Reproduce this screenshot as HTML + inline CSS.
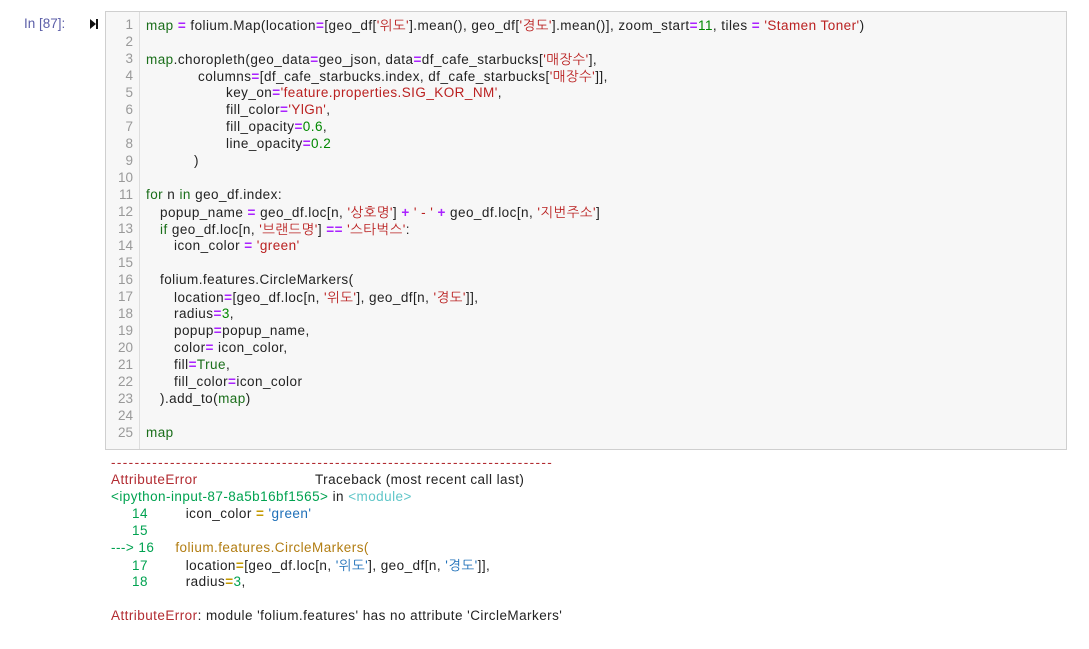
<!DOCTYPE html>
<html><head><meta charset="utf-8">
<style>
html,body{margin:0;padding:0;background:#fff;width:1089px;height:649px;overflow:hidden;}
body{font-family:"Liberation Sans","NanumGothic","Noto Sans CJK KR",sans-serif;font-size:13.5px;color:#222;letter-spacing:0.45px;}
.prompt{position:absolute;left:24px;top:16px;color:#5c5fa8;font-size:13.5px;letter-spacing:0;}
.run{position:absolute;left:90px;top:19px;width:0;height:0;border-left:6px solid #111;border-top:5px solid transparent;border-bottom:5px solid transparent;}
.runbar{position:absolute;left:96px;top:19px;width:2px;height:10px;background:#111;}
.box{position:absolute;left:105px;top:11px;width:960px;height:437px;background:#f7f7f7;border:1px solid #cfcfcf;}
.gut{position:absolute;left:0;top:0;width:33px;height:437px;border-right:1px solid #ddd;background:#f7f7f7;}
.ln{position:absolute;left:0;width:27px;text-align:right;color:#999;letter-spacing:0;}
.cl{position:absolute;left:40px;white-space:pre;}
.o{color:#aa22ff;font-weight:bold}
.s{color:#ba2121}
.n{color:#080}
.g{color:#1a6e1a}
.out{position:absolute;left:111px;white-space:pre;}
.r{color:#b22b31}
.gr{color:#00a250}
.cy{color:#60c6c8}
.bl{color:#1d6fb8}
.y{color:#c49a00;font-weight:bold}
.yl{color:#b27d12}
</style></head><body>
<div class="prompt">In [87]:</div>
<div class="run"></div><div class="runbar"></div>
<div class="box">
<div class="gut"></div>
<div class="ln" style="top:5px">1</div><div class="ln" style="top:22px">2</div><div class="ln" style="top:39px">3</div><div class="ln" style="top:56px">4</div><div class="ln" style="top:73px">5</div><div class="ln" style="top:90px">6</div><div class="ln" style="top:107px">7</div><div class="ln" style="top:124px">8</div><div class="ln" style="top:141px">9</div><div class="ln" style="top:158px">10</div><div class="ln" style="top:175px">11</div><div class="ln" style="top:192px">12</div><div class="ln" style="top:209px">13</div><div class="ln" style="top:226px">14</div><div class="ln" style="top:243px">15</div><div class="ln" style="top:260px">16</div><div class="ln" style="top:277px">17</div><div class="ln" style="top:294px">18</div><div class="ln" style="top:311px">19</div><div class="ln" style="top:328px">20</div><div class="ln" style="top:345px">21</div><div class="ln" style="top:362px">22</div><div class="ln" style="top:379px">23</div><div class="ln" style="top:396px">24</div><div class="ln" style="top:413px">25</div>
<div class="cl" style="top:5px"><span class="g">map</span> <span class="o">=</span> folium.Map(location<span class="o">=</span>[geo_df[<span class="s">'위도'</span>].mean(), geo_df[<span class="s">'경도'</span>].mean()], zoom_start<span class="o">=</span><span class="n">11</span>, tiles <span class="o">=</span> <span class="s">'Stamen Toner'</span>)</div>
<div class="cl" style="top:39px"><span class="g">map</span>.choropleth(geo_data<span class="o">=</span>geo_json, data<span class="o">=</span>df_cafe_starbucks[<span class="s">'매장수'</span>],</div>
<div class="cl" style="top:56px;left:92px">columns<span class="o">=</span>[df_cafe_starbucks.index, df_cafe_starbucks[<span class="s">'매장수'</span>]],</div>
<div class="cl" style="top:73px;left:120px">key_on<span class="o">=</span><span class="s">'feature.properties.SIG_KOR_NM'</span>,</div>
<div class="cl" style="top:90px;left:120px">fill_color<span class="o">=</span><span class="s">'YlGn'</span>,</div>
<div class="cl" style="top:107px;left:120px">fill_opacity<span class="o">=</span><span class="n">0.6</span>,</div>
<div class="cl" style="top:124px;left:120px">line_opacity<span class="o">=</span><span class="n">0.2</span></div>
<div class="cl" style="top:141px;left:88px">)</div>
<div class="cl" style="top:175px"><span class="g">for</span> n <span class="g">in</span> geo_df.index:</div>
<div class="cl" style="top:192px;left:54px">popup_name <span class="o">=</span> geo_df.loc[n, <span class="s">'상호명'</span>] <span class="o">+</span> <span class="s">' - '</span> <span class="o">+</span> geo_df.loc[n, <span class="s">'지번주소'</span>]</div>
<div class="cl" style="top:209px;left:54px"><span class="g">if</span> geo_df.loc[n, <span class="s">'브랜드명'</span>] <span class="o">==</span> <span class="s">'스타벅스'</span>:</div>
<div class="cl" style="top:226px;left:68px">icon_color <span class="o">=</span> <span class="s">'green'</span></div>
<div class="cl" style="top:260px;left:54px">folium.features.CircleMarkers(</div>
<div class="cl" style="top:277px;left:68px">location<span class="o">=</span>[geo_df.loc[n, <span class="s">'위도'</span>], geo_df[n, <span class="s">'경도'</span>]],</div>
<div class="cl" style="top:294px;left:68px">radius<span class="o">=</span><span class="n">3</span>,</div>
<div class="cl" style="top:311px;left:68px">popup<span class="o">=</span>popup_name,</div>
<div class="cl" style="top:328px;left:68px">color<span class="o">=</span> icon_color,</div>
<div class="cl" style="top:345px;left:68px">fill<span class="o">=</span><span class="g">True</span>,</div>
<div class="cl" style="top:362px;left:68px">fill_color<span class="o">=</span>icon_color</div>
<div class="cl" style="top:379px;left:54px">).add_to(<span class="g">map</span>)</div>
<div class="cl" style="top:413px"><span class="g">map</span></div>
</div>
<div class="out r" style="top:455px;letter-spacing:1.4px">---------------------------------------------------------------------------</div>
<div class="out" style="top:472px"><span class="r">AttributeError</span>                            Traceback (most recent call last)</div>
<div class="out" style="top:489px"><span class="gr">&lt;ipython-input-87-8a5b16bf1565&gt;</span> in <span class="cy">&lt;module&gt;</span></div>
<div class="out" style="top:506px"><span class="gr">     14</span>         icon_color <span class="y">=</span> <span class="bl">'green'</span></div>
<div class="out" style="top:523px"><span class="gr">     15</span></div>
<div class="out" style="top:540px"><span class="gr">---&gt; 16</span>     <span class="yl">folium.features.CircleMarkers(</span></div>
<div class="out" style="top:557px"><span class="gr">     17</span>         location<span class="y">=</span>[geo_df.loc[n, <span class="bl">'위도'</span>], geo_df[n, <span class="bl">'경도'</span>]],</div>
<div class="out" style="top:574px"><span class="gr">     18</span>         radius<span class="y">=</span><span class="gr">3</span>,</div>
<div class="out" style="top:608px"><span class="r">AttributeError</span>: module 'folium.features' has no attribute 'CircleMarkers'</div>
</body></html>
